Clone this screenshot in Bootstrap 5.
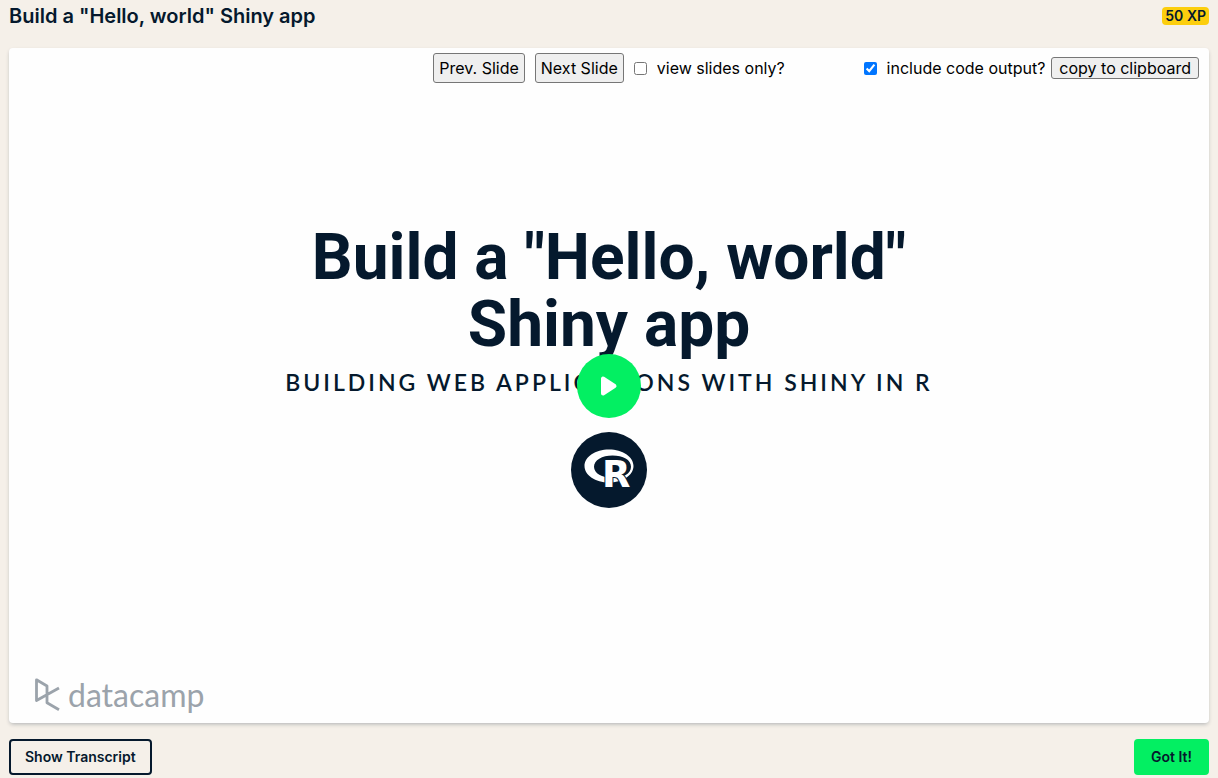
<!DOCTYPE html>
<html lang="en">
<head>
<meta charset="utf-8">
<meta name="viewport" content="width=device-width, initial-scale=1">
<title>Build a "Hello, world" Shiny app</title>
<link href="https://cdn.jsdelivr.net/npm/bootstrap@5.3.0/dist/css/bootstrap.min.css" rel="stylesheet">
<style>
  :root { --navy: #05192d; --green: #03ef62; }
  body { background: #f5f0e9; color: var(--navy); font-family: Inter, "Liberation Sans", sans-serif; padding: 0 9px; }
  .page-head { height: 32px; }
  .page-title { font-size: 20px; line-height: 32px; font-weight: 600; }
  .xp-pill { background: #fcce0d; color: var(--navy); font-size: 14px; line-height: 18px; font-weight: 600; padding: 0 3px; }
  .slide-card { background: #fefefe; border-radius: 4px; aspect-ratio: 16 / 9; box-shadow: 0 2px 4px -1px rgba(5, 25, 45, .3); }
  .tool-row { display: grid; grid-template-columns: 1fr auto 1fr; color: #000; font-size: 16px; line-height: 24px; padding: 5px 10px 0; }
  .tool-group { gap: 10px; }
  .plain-btn { background: #efefef; border: 1px solid #767676; border-radius: 3px; color: #000; padding: 2px 5px; }
  .plain-btn:hover { background: #e5e5e5; }
  .slim-btn { padding: 0 7px; line-height: 20px; margin-left: -4px; }
  .tick { width: 13px; height: 13px; accent-color: #0075ff; margin: 0; }
  .slide-body { padding-bottom: 28px; }
  .slide-title { font-family: Roboto, "Liberation Sans", sans-serif; font-size: 64px; line-height: 67px; font-weight: 700; max-width: 680px; }
  .slide-sub { font-family: Lato, "Liberation Sans", sans-serif; font-size: 23px; line-height: 32px; font-weight: 600; letter-spacing: 3px; margin: 8px 0 34px; }
  .play-btn { width: 64px; height: 64px; background: var(--green); }
  .brand-mark { color: #9ba3ab; padding: 0 0 10px 25px; }
  .brand-name { font-family: Lato, "Liberation Sans", sans-serif; font-size: 32px; line-height: 36px; }
  .foot-btn { font-size: 14px; line-height: 20px; font-weight: 600; border: 2px solid var(--navy); border-radius: 4px; color: var(--navy); padding: 6px 14px; }
  .foot-btn:hover { border-color: var(--navy); background: #e8e3da; }
  .go-btn { background: var(--green); border-color: var(--green); }
  .go-btn:hover { background: #00c74e; border-color: #00c74e; }
  .go-btn { padding: 6px 15px; }
</style>
</head>
<body>
<header class="page-head d-flex justify-content-between align-items-center mb-3">
  <h1 class="page-title mb-0">Build a "Hello, world" Shiny app</h1>
  <span class="xp-pill rounded-1">50 XP</span>
</header>

<main class="slide-card position-relative d-flex flex-column">
  <div class="tool-row">
    <div></div>
    <div class="tool-group d-flex align-items-center">
      <button type="button" class="plain-btn">Prev. Slide</button>
      <button type="button" class="plain-btn">Next Slide</button>
      <input type="checkbox" class="tick" id="slidesOnly">
      <label for="slidesOnly">view slides only?</label>
    </div>
    <div class="tool-group d-flex align-items-center justify-content-end">
      <input type="checkbox" class="tick" id="codeOutput" checked>
      <label for="codeOutput">include code output?</label>
      <button type="button" class="plain-btn slim-btn">copy to clipboard</button>
    </div>
  </div>

  <section class="slide-body flex-grow-1 d-flex flex-column align-items-center justify-content-center text-center">
    <h2 class="slide-title mb-0">Build a "Hello, world" Shiny app</h2>
    <p class="slide-sub">BUILDING WEB APPLICATIONS WITH SHINY IN R</p>
    <svg width="76" height="76" viewBox="0 0 76 76" role="img" aria-label="R">
      <circle cx="38" cy="38" r="38" fill="#05192d"/>
      <path fill="#fff" fill-rule="evenodd" d="M38 17.500c13.500 0 24.500 7.300 24.500 16.500S51.500 50.500 38 50.500 13.500 43.200 13.500 34 24.500 17.500 38 17.500zM41.500 23.500c-10.500 0-18.500 4.800-18.500 11.300S31 46 41.500 46 60 42 60 34.800 52 23.500 41.500 23.500z"/>
      <text x="31" y="55" font-family="DejaVu Sans, sans-serif" font-weight="700" font-size="37" fill="#fff" stroke="#05192d" stroke-width="2" paint-order="stroke">R</text>
    </svg>
  </section>

  <div class="brand-mark d-flex align-items-center">
    <svg class="me-2" width="26" height="34" viewBox="0 0 26 34" fill="none" stroke="currentColor" stroke-width="2.800" stroke-linejoin="round" aria-hidden="true">
      <path d="M25 10L2.500 22.500V1.800L13 8V24.800L25 31.800"/>
    </svg>
    <span class="brand-name">datacamp</span>
  </div>

  <button type="button" class="play-btn btn rounded-circle border-0 p-0 position-absolute top-50 start-50 translate-middle" aria-label="Play">
    <svg class="d-block mx-auto" width="18" height="22" viewBox="0 0 18 22" aria-hidden="true">
      <path d="M3 3.500v15L14.500 11z" fill="#fff" stroke="#fff" stroke-width="4" stroke-linejoin="round"/>
    </svg>
  </button>
</main>

<footer class="d-flex justify-content-between pt-3">
  <button type="button" class="foot-btn btn">Show Transcript</button>
  <button type="button" class="foot-btn go-btn btn">Got It!</button>
</footer>
<script src="https://cdn.jsdelivr.net/npm/bootstrap@5.3.0/dist/js/bootstrap.bundle.min.js"></script>
</body>
</html>
